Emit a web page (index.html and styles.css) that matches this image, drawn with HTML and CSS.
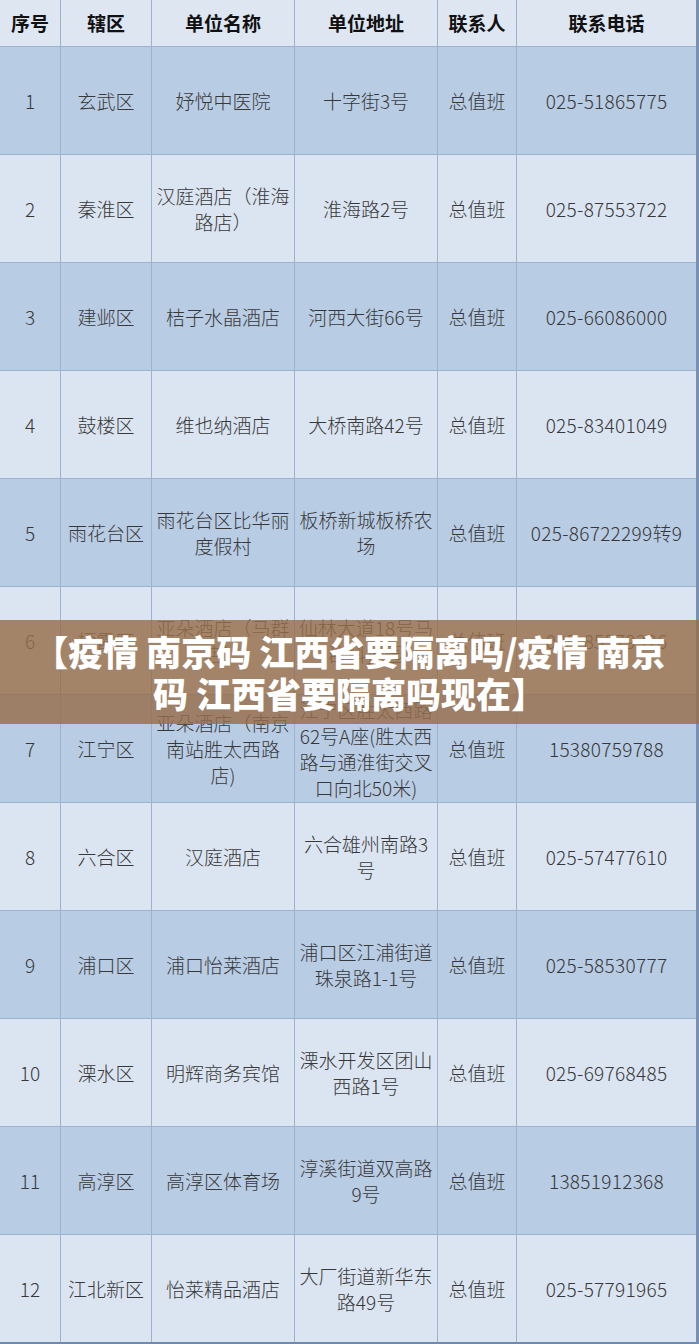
FILE: index.html
```html
<!DOCTYPE html>
<html lang="zh-CN">
<head>
<meta charset="utf-8">
<title>南京隔离酒店</title>
<link rel="stylesheet" href="styles.css">
</head>
<body>
<div class="page">
  <div class="sheet">
    <div class="row head">
      <div>序号</div><div>辖区</div><div>单位名称</div><div>单位地址</div><div>联系人</div><div>联系电话</div>
    </div>
    <div class="row blue">
      <div>1</div><div>玄武区</div><div>妤悦中医院</div><div>十字街3号</div><div>总值班</div><div>025-51865775</div>
    </div>
    <div class="row light">
      <div>2</div><div>秦淮区</div><div>汉庭酒店（淮海路店）</div><div>淮海路2号</div><div>总值班</div><div>025-87553722</div>
    </div>
    <div class="row blue">
      <div>3</div><div>建邺区</div><div>桔子水晶酒店</div><div>河西大街66号</div><div>总值班</div><div>025-66086000</div>
    </div>
    <div class="row light">
      <div>4</div><div>鼓楼区</div><div>维也纳酒店</div><div>大桥南路42号</div><div>总值班</div><div>025-83401049</div>
    </div>
    <div class="row blue">
      <div>5</div><div>雨花台区</div><div>雨花台区比华丽度假村</div><div>板桥新城板桥农场</div><div>总值班</div><div>025-86722299转9</div>
    </div>
    <div class="row light">
      <div>6</div><div>栖霞区</div><div>亚朵酒店（马群店）</div><div>仙林大道18号马群科技园</div><div>总值班</div><div>025-85579326</div>
    </div>
    <div class="row blue">
      <div>7</div><div>江宁区</div><div>亚朵酒店（南京南站胜太西路店)</div><div>江宁区胜太西路62号A座(胜太西路与通淮街交叉口向北50米)</div><div>总值班</div><div>15380759788</div>
    </div>
    <div class="row light">
      <div>8</div><div>六合区</div><div>汉庭酒店</div><div>六合雄州南路3号</div><div>总值班</div><div>025-57477610</div>
    </div>
    <div class="row blue">
      <div>9</div><div>浦口区</div><div>浦口怡莱酒店</div><div>浦口区江浦街道珠泉路1-1号</div><div>总值班</div><div>025-58530777</div>
    </div>
    <div class="row light">
      <div>10</div><div>溧水区</div><div>明辉商务宾馆</div><div>溧水开发区团山西路1号</div><div>总值班</div><div>025-69768485</div>
    </div>
    <div class="row blue">
      <div>11</div><div>高淳区</div><div>高淳区体育场</div><div>淳溪街道双高路9号</div><div>总值班</div><div>13851912368</div>
    </div>
    <div class="row light">
      <div>12</div><div>江北新区</div><div>怡莱精品酒店</div><div>大厂街道新华东路49号</div><div>总值班</div><div>025-57791965</div>
    </div>
  </div>
  <div class="banner">
    <h1 class="banner-title">【疫情 南京码 江西省要隔离吗/疫情 南京码 江西省要隔离吗现在】</h1>
  </div>
</div>
</body>
</html>
```

FILE: styles.css
```css
html, body {
  margin: 0;
  padding: 0;
  background: #ffffff;
}

.page {
  position: relative;
  width: 699px;
  height: 1344px;
  overflow: hidden;
  font-family: "Noto Sans CJK SC", "Noto Sans", sans-serif;
}

.sheet {
  display: grid;
  grid-template-columns: 60px 90px 142px 142px 78px 179px;
  grid-template-rows: 46px repeat(12, 107px);
  gap: 1px;
  width: 696px;
  background: #9cb3cf;
  border-right: 3px solid #7890b2;
  border-bottom: 2px solid #6f8ab0;
}

.row {
  display: contents;
}

.row > div {
  display: flex;
  align-items: center;
  justify-content: center;
  text-align: center;
  padding: 0 3px;
  font-size: 19px;
  line-height: 26px;
  font-weight: 300;
  color: #383838;
}

.row > div:last-child {
  letter-spacing: 0.3px;
}

.row.head > div {
  background: #dde6f1;
  color: #111111;
  font-weight: 700;
  font-size: 19px;
  letter-spacing: 0;
}

.row.blue > div {
  background: #b8cce4;
}

.row.light > div {
  background: #dbe5f1;
}

.banner {
  position: absolute;
  left: 0;
  right: 0;
  top: 620px;
  height: 104px;
  background: rgba(150, 110, 75, 0.82);
  display: flex;
  align-items: center;
  justify-content: center;
  padding: 0 28px;
}

.banner-title {
  margin: 0;
  color: #ffffff;
  font-size: 35px;
  line-height: 42px;
  font-weight: 900;
  text-align: center;
  letter-spacing: 0;
}
```
